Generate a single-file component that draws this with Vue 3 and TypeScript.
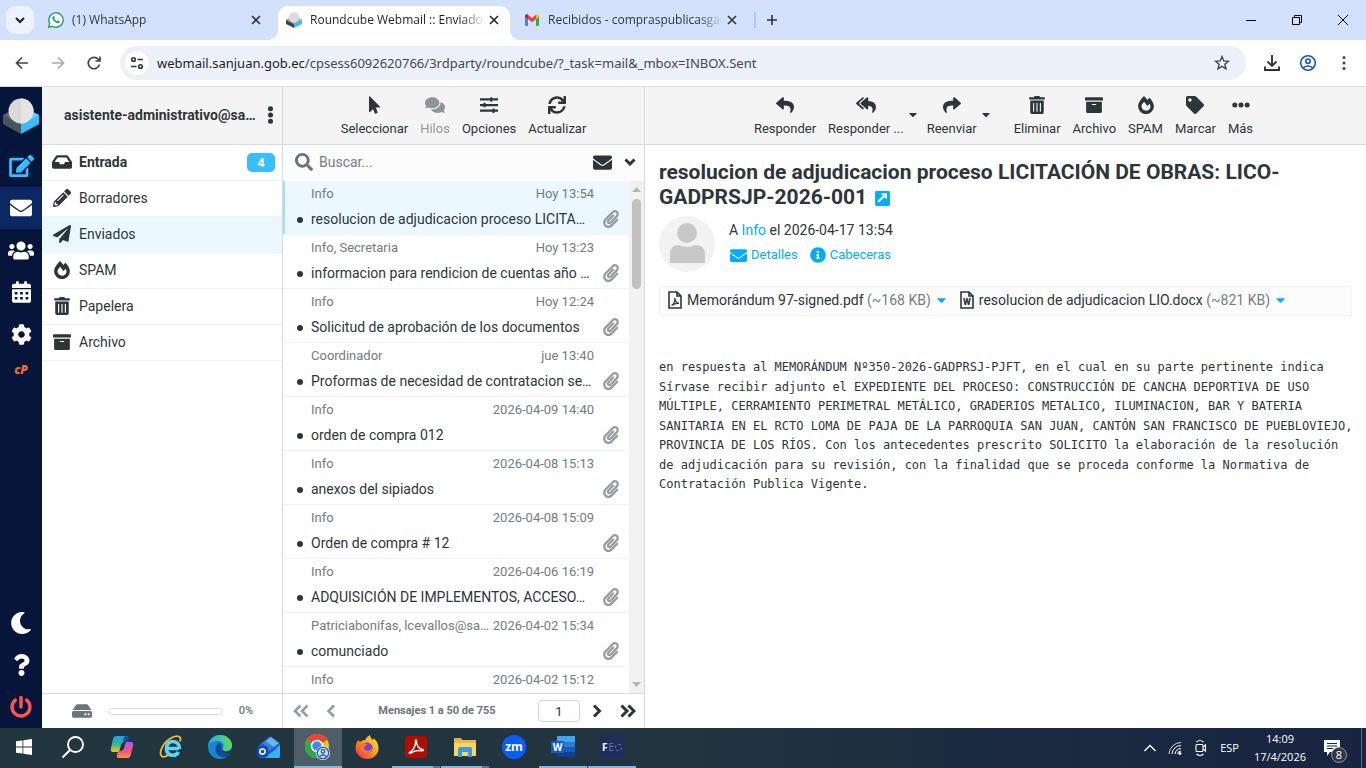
<script setup lang="ts">
import { h, ref } from 'vue'

const paths: Record<string, [number, string]> = {
  envelope: [512, 'M502.3 190.8c3.9-3.1 9.7-.2 9.7 4.7V400c0 26.5-21.5 48-48 48H48c-26.5 0-48-21.5-48-48V195.6c0-5 5.7-7.8 9.7-4.7 22.4 17.4 52.1 39.5 154.1 113.6 21.1 15.4 56.7 47.8 92.2 47.6 35.7.3 72-32.8 92.3-47.6 102-74.1 131.6-96.3 154-113.7zM256 320c23.2.4 56.6-29.2 73.4-41.4 132.7-96.3 142.8-104.7 173.4-128.7 5.8-4.5 9.2-11.5 9.2-18.9v-19c0-26.5-21.5-48-48-48H48c-26.5 0-48 21.5-48 48v19c0 7.4 3.4 14.3 9.2 18.9 30.6 23.9 40.7 32.4 173.4 128.7 16.8 12.2 50.2 41.8 73.4 41.4z'],
  inbox: [576, 'M567.938 243.908L462.25 85.374A48.003 48.003 0 0 0 422.311 64H153.689a48 48 0 0 0-39.938 21.374L8.062 243.908A47.994 47.994 0 0 0 0 270.533V400c0 26.51 21.49 48 48 48h480c26.51 0 48-21.49 48-48V270.533a47.994 47.994 0 0 0-8.062-26.625zM162.252 128h251.497l85.333 128H376l-32 64H232l-32-64H76.918l85.334-128z'],
  pencil: [512, 'M497.9 142.1l-46.1 46.1c-4.7 4.7-12.3 4.7-17 0l-111-111c-4.7-4.7-4.7-12.3 0-17l46.1-46.1c18.7-18.7 49.1-18.7 67.9 0l60.1 60.1c18.8 18.7 18.8 49.1 0 67.9zM284.2 99.8L21.6 362.4.4 483.9c-2.9 16.4 11.4 30.6 27.8 27.8l121.5-21.3 262.6-262.6c4.7-4.7 4.7-12.3 0-17l-111-111c-4.8-4.7-12.4-4.7-17.1 0zM124.1 339.9c-5.5-5.5-5.5-14.3 0-19.8l154-154c5.5-5.5 14.3-5.5 19.8 0s5.5 14.3 0 19.8l-154 154c-5.5 5.5-14.3 5.5-19.8 0zM88 424h48v36.3l-64.5 11.3-31.1-31.1L51.7 376H88v48z'],
  plane: [512, 'M476 3.2L12.5 270.6c-18.1 10.4-15.8 35.6 2.2 43.2L121 358.4l287.3-253.2c5.5-4.9 13.3 2.6 8.6 8.3L176 407v80.5c0 23.6 28.5 32.9 42.5 15.8L282 426l124.6 52.2c14.2 6 30.4-2.9 33-18.2l72-432C515 7.8 493.3-6.8 476 3.2z'],
  fire: [448, 'M323.56 51.2c-20.8 19.3-39.58 39.59-56.22 59.97C240.08 73.62 206.28 35.53 168 0 69.74 91.17 0 209.96 0 281.6 0 408.85 100.29 512 224 512s224-103.15 224-230.4c0-53.27-51.98-163.14-124.44-230.4zm-19.47 340.65C282.43 407.01 255.72 416 226.86 416 154.71 416 96 368.26 96 290.75c0-38.61 24.31-72.63 72.79-130.75 6.93 7.98 98.83 125.34 98.83 125.34l58.63-66.88c4.14 6.85 7.91 13.55 11.27 19.97 27.35 52.19 15.81 118.97-33.43 153.42z'],
  trash: [448, 'M32 464a48 48 0 0 0 48 48h288a48 48 0 0 0 48-48V128H32zm272-256a16 16 0 0 1 32 0v224a16 16 0 0 1-32 0zm-96 0a16 16 0 0 1 32 0v224a16 16 0 0 1-32 0zm-96 0a16 16 0 0 1 32 0v224a16 16 0 0 1-32 0zM432 32H312l-9.4-18.7A24 24 0 0 0 281.1 0H166.8a23.72 23.72 0 0 0-21.4 13.3L136 32H16A16 16 0 0 0 0 48v32a16 16 0 0 0 16 16h416a16 16 0 0 0 16-16V48a16 16 0 0 0-16-16z'],
  archive: [512, 'M32 448c0 17.7 14.3 32 32 32h384c17.7 0 32-14.3 32-32V160H32v288zm160-212c0-6.6 5.4-12 12-12h104c6.6 0 12 5.4 12 12v8c0 6.6-5.4 12-12 12H204c-6.6 0-12-5.4-12-12v-8zM480 32H32C14.3 32 0 46.3 0 64v48c0 8.8 7.2 16 16 16h480c8.8 0 16-7.2 16-16V64c0-17.7-14.3-32-32-32z'],
  edit: [576, 'M402.6 83.2l90.2 90.2c3.8 3.8 3.8 10 0 13.8L274.4 405.6l-92.8 10.3c-12.4 1.4-22.9-9.1-21.5-21.5l10.3-92.8L388.8 83.2c3.8-3.8 10-3.8 13.8 0zm162-22.9l-48.8-48.8c-15.2-15.2-39.9-15.2-55.2 0l-35.4 35.4c-3.8 3.8-3.8 10 0 13.8l90.2 90.2c3.8 3.8 10 3.8 13.8 0l35.4-35.4c15.2-15.3 15.2-40 0-55.2zM384 346.2V448H64V128h229.8c3.2 0 6.2-1.3 8.5-3.5l40-40c7.6-7.6 2.2-20.5-8.5-20.5H48C21.5 64 0 85.5 0 112v352c0 26.5 21.5 48 48 48h352c26.5 0 48-21.5 48-48V306.2c0-10.7-12.9-16-20.5-8.5l-40 40c-2.2 2.3-3.5 5.3-3.5 8.5z'],
  users: [640, 'M96 224c35.3 0 64-28.7 64-64s-28.7-64-64-64-64 28.7-64 64 28.7 64 64 64zm448 0c35.3 0 64-28.7 64-64s-28.7-64-64-64-64 28.7-64 64 28.7 64 64 64zm32 32h-64c-17.6 0-33.5 7.1-45.1 18.6 40.3 22.1 68.9 62 75.1 109.4h66c17.7 0 32-14.3 32-32v-32c0-35.3-28.7-64-64-64zm-256 0c61.9 0 112-50.1 112-112S381.9 32 320 32 208 82.1 208 144s50.1 112 112 112zm76.8 32h-8.3c-20.8 10-43.9 16-68.5 16s-47.6-6-68.5-16h-8.3C179.6 288 128 339.6 128 403.2V432c0 26.5 21.5 48 48 48h288c26.5 0 48-21.5 48-48v-28.8c0-63.6-51.6-115.2-115.2-115.2zm-223.7-13.4C161.5 263.1 145.6 256 128 256H64c-35.3 0-64 28.7-64 64v32c0 17.7 14.3 32 32 32h65.9c6.3-47.4 34.9-87.3 75.2-109.4z'],
  calendar: [448, 'M0 464c0 26.5 21.5 48 48 48h352c26.5 0 48-21.5 48-48V192H0zM64 256h64v56h-64zM192 256h64v56h-64zM320 256h64v56h-64zM64 376h64v56h-64zM192 376h64v56h-64zM320 376h64v56h-64zM400 64h-48V16c0-8.8-7.2-16-16-16h-32c-8.8 0-16 7.2-16 16v48H160V16c0-8.8-7.2-16-16-16h-32c-8.8 0-16 7.2-16 16v48H48C21.5 64 0 85.5 0 112v48h448v-48c0-26.5-21.5-48-48-48z'],
  cog: [512, 'M487.4 315.7l-42.6-24.6c4.3-23.2 4.3-47 0-70.2l42.6-24.6c4.9-2.8 7.1-8.6 5.5-14-11.1-35.6-30-67.8-54.7-94.6-3.8-4.1-10-5.1-14.8-2.3L380.8 110c-17.9-15.4-38.5-27.3-60.8-35.1V25.8c0-5.6-3.9-10.5-9.4-11.7-36.7-8.2-74.3-7.8-109.2 0-5.5 1.2-9.4 6.1-9.4 11.7V75c-22.2 7.9-42.8 19.8-60.8 35.1L88.7 85.5c-4.9-2.8-11-1.9-14.8 2.3-24.7 26.7-43.6 58.9-54.7 94.6-1.7 5.4.6 11.2 5.5 14L67.3 221c-4.3 23.2-4.3 47 0 70.2l-42.6 24.6c-4.9 2.8-7.1 8.6-5.5 14 11.1 35.6 30 67.8 54.7 94.6 3.8 4.1 10 5.1 14.8 2.3l42.6-24.6c17.9 15.4 38.5 27.3 60.8 35.1v49.2c0 5.6 3.9 10.5 9.4 11.7 36.7 8.2 74.3 7.8 109.2 0 5.5-1.2 9.4-6.1 9.4-11.7v-49.2c22.2-7.9 42.8-19.8 60.8-35.1l42.6 24.6c4.9 2.8 11 1.9 14.8-2.3 24.7-26.7 43.6-58.9 54.7-94.6 1.5-5.5-.7-11.3-5.6-14.1zM256 336c-44.1 0-80-35.9-80-80s35.9-80 80-80 80 35.9 80 80-35.9 80-80 80z'],
  moon: [512, 'M283.211 512c78.962 0 151.079-35.925 198.857-94.792 7.068-8.708-.639-21.43-11.562-19.35-124.203 23.654-238.262-71.576-238.262-196.954 0-72.222 38.662-138.635 101.498-174.394 9.686-5.512 7.25-20.197-3.756-22.23A258.156 258.156 0 0 0 283.211 0c-141.309 0-256 114.511-256 256 0 141.309 114.511 256 256 256z'],
  question: [384, 'M202.021 0C122.202 0 70.503 32.703 29.914 91.026c-7.363 10.58-5.093 25.086 5.178 32.874l43.138 32.709c10.373 7.865 25.132 6.026 33.253-4.148 25.049-31.381 43.63-49.449 82.757-49.449 30.764 0 68.816 19.799 68.816 49.631 0 22.552-18.617 34.134-48.993 51.164-35.423 19.86-82.299 44.576-82.299 106.405V320c0 13.255 10.745 24 24 24h72.471c13.255 0 24-10.745 24-24v-5.773c0-42.86 125.268-44.645 125.268-160.627C377.504 66.256 286.902 0 202.021 0zM192 373.459c-38.196 0-69.271 31.075-69.271 69.271 0 38.195 31.075 69.27 69.271 69.27s69.271-31.075 69.271-69.271-31.075-69.27-69.271-69.27z'],
  power: [512, 'M400 54.1c63 45 104 118.6 104 201.9 0 136.8-110.8 247.7-247.5 248C120 504.3 8.2 393 8 256.4 7.9 173.1 48.9 99.3 111.8 54.2c11.7-8.3 28-4.8 35 7.7L162.6 90c5.9 10.5 3.1 23.8-6.6 31-41.5 30.8-68 79.6-68 134.9-.1 92.3 74.5 168.1 168 168.1 91.6 0 168.6-74.2 168-169.1-.3-51.8-24.7-101.8-68.1-134-9.7-7.2-12.4-20.5-6.5-30.9l15.8-28.1c7-12.4 23.2-16.1 34.8-7.8zM296 264V24c0-13.3-10.7-24-24-24h-32c-13.3 0-24 10.7-24 24v240c0 13.3 10.7 24 24 24h32c13.3 0 24-10.7 24-24z'],
  pointer: [320, 'M302.189 329.126H196.105l55.831 135.993c3.889 9.428-.555 19.999-9.444 23.999l-49.165 21.427c-9.165 4-19.443-.571-23.332-9.714l-53.053-129.136-86.664 89.138C18.729 472.71 0 463.554 0 447.977V18.299C0 1.899 19.921-6.096 30.277 5.443l284.412 292.542c11.472 11.179 3.007 31.141-12.5 31.141z'],
  comments: [576, 'M416 192c0-88.4-93.1-160-208-160S0 103.6 0 192c0 34.3 14.1 65.9 38 92-13.4 30.2-35.5 54.2-35.8 54.5-2.2 2.3-2.8 5.7-1.5 8.7S4.8 352 8 352c36.6 0 66.9-12.3 88.7-25 32.2 15.7 70.3 25 111.3 25 114.9 0 208-71.6 208-160zm122 220c23.9-26 38-57.7 38-92 0-66.9-53.5-124.2-129.3-148.1.9 6.6 1.3 13.3 1.3 20.1 0 105.9-107.7 192-240 192-10.8 0-21.3-.8-31.7-1.9C207.8 439.6 281.8 480 368 480c41 0 79.1-9.2 111.3-25 21.8 12.7 52.1 25 88.7 25 3.2 0 6.1-1.9 7.3-4.8 1.3-2.9.7-6.3-1.5-8.7-.3-.3-22.4-24.2-35.8-54.5z'],
  sliders: [512, 'M0 64h288V48q0-16 16-16h32q16 0 16 16v16h160v64H352v16q0 16-16 16h-32q-16 0-16-16v-16H0zM0 224h96v-16q0-16 16-16h32q16 0 16 16v16h352v64H160v16q0 16-16 16h-32q-16 0-16-16v-16H0zM0 384h352v-16q0-16 16-16h32q16 0 16 16v16h96v64h-96v16q0 16-16 16h-32q-16 0-16-16v-16H0z'],
  sync: [512, 'M440.65 12.57l4 82.77A247.16 247.16 0 0 0 255.83 8C134.73 8 33.91 94.92 12.29 209.82A12 12 0 0 0 24.09 224h49.05a12 12 0 0 0 11.67-9.26 175.91 175.91 0 0 1 317-56.94l-101.46-4.86a12 12 0 0 0-12.57 12v47.41a12 12 0 0 0 12 12H500a12 12 0 0 0 12-12V12a12 12 0 0 0-12-12h-47.37a12 12 0 0 0-11.98 12.57zM255.83 432a175.61 175.61 0 0 1-146-77.8l101.8 4.87a12 12 0 0 0 12.57-12v-47.4a12 12 0 0 0-12-12H12a12 12 0 0 0-12 12V500a12 12 0 0 0 12 12h47.35a12 12 0 0 0 12-12.6l-4.15-82.57A247.17 247.17 0 0 0 255.83 504c121.11 0 221.93-86.92 243.55-201.82a12 12 0 0 0-11.8-14.18h-49.05a12 12 0 0 0-11.67 9.26A175.86 175.86 0 0 1 255.83 432z'],
  search: [512, 'M505 442.7L405.3 343c-4.5-4.5-10.6-7-17-7H372c27.6-35.3 44-79.7 44-128C416 93.1 322.9 0 208 0S0 93.1 0 208s93.1 208 208 208c48.3 0 92.7-16.4 128-44v16.3c0 6.4 2.5 12.5 7 17l99.7 99.7c9.4 9.4 24.6 9.4 33.9 0l28.3-28.3c9.4-9.4 9.4-24.6.1-34zM208 336c-70.7 0-128-57.2-128-128 0-70.7 57.2-128 128-128 70.7 0 128 57.2 128 128 0 70.7-57.2 128-128 128z'],
  clip: [448, 'M43.246 466.142c-58.43-60.289-57.341-157.511 1.386-217.581L254.392 34c44.316-45.332 116.351-45.336 160.671 0 43.89 44.894 43.943 117.329 0 162.276L232.214 383.128c-29.855 30.537-78.633 30.111-107.982-.998-28.275-29.97-27.368-77.473 1.452-106.953l143.743-146.835c6.182-6.314 16.312-6.422 22.626-.241l22.861 22.379c6.315 6.182 6.422 16.312.241 22.626L171.427 319.927c-4.932 5.045-5.236 13.428-.648 18.292 4.372 4.634 11.245 4.711 15.688.165l182.849-186.851c19.613-20.062 19.613-52.725-.011-72.798-19.189-19.627-49.957-19.637-69.154 0L90.39 293.295c-34.763 35.56-35.299 93.12-1.191 128.313 34.01 35.093 88.985 35.137 123.058.286l172.06-175.999c6.177-6.319 16.307-6.433 22.626-.256l22.877 22.364c6.319 6.177 6.434 16.307.256 22.626l-172.06 175.998c-59.576 60.938-155.943 60.216-214.77-.485z'],
  reply: [512, 'M8.309 189.836L184.313 37.851C199.719 24.546 224 35.347 224 56.015v80.053c160.629 1.839 288 34.032 288 186.258 0 61.441-39.581 122.309-83.333 154.132-13.653 9.931-33.111-2.533-28.077-18.631 45.344-145.012-21.507-183.51-176.59-185.742V360c0 20.7-24.3 31.453-39.687 18.164l-176.004-152c-11.071-9.562-11.086-26.753 0-36.328z'],
  replyAll: [576, 'M136.309 189.836L312.313 37.851C327.72 24.546 352 35.348 352 56.015v82.763c129.182 10.231 224 52.212 224 183.548 0 61.441-39.582 122.309-83.333 154.132-13.653 9.931-33.111-2.533-28.077-18.631 38.512-123.162-3.922-169.482-112.59-182.015v84.175c0 20.701-24.3 31.453-39.687 18.164L136.309 226.164c-11.071-9.561-11.086-26.753 0-36.328zm-128 36.328L184.313 378.15C199.7 391.439 224 380.687 224 359.986v-15.818l-108.606-93.785A55.96 55.96 0 0 1 96 207.998a55.953 55.953 0 0 1 19.393-42.38L224 71.832V56.015c0-20.667-24.28-31.469-39.687-18.164L8.309 189.836c-11.086 9.575-11.071 26.767 0 36.328z'],
  forward: [512, 'M503.691 189.836L327.687 37.851C312.281 24.546 288 35.347 288 56.015v80.053C127.371 137.907 0 170.1 0 322.326c0 61.441 39.581 122.309 83.333 154.132 13.653 9.931 33.111-2.533 28.077-18.631C66.066 312.814 132.917 274.316 288 272.085V360c0 20.7 24.3 31.453 39.687 18.164l176.004-152c11.071-9.562 11.086-26.753 0-36.328z'],
  tag: [512, 'M0 252.118V48C0 21.49 21.49 0 48 0h204.118a48 48 0 0 1 33.941 14.059l211.882 211.882c18.745 18.745 18.745 49.137 0 67.882L293.823 497.941c-18.745 18.745-49.137 18.745-67.882 0L14.059 286.059A48 48 0 0 1 0 252.118zM112 64c-26.51 0-48 21.49-48 48s21.49 48 48 48 48-21.49 48-48-21.49-48-48-48z'],
  dots: [512, 'M328 256a72 72 0 1 1-144 0 72 72 0 0 1 144 0zm104-72a72 72 0 1 0 0 144 72 72 0 0 0 0-144zm-352 0a72 72 0 1 0 0 144 72 72 0 0 0 0-144z'],
  kebab: [192, 'M96 184a72 72 0 1 1 0 144 72 72 0 0 1 0-144zM24 80a72 72 0 1 1 144 0 72 72 0 0 1-144 0zm0 352a72 72 0 1 1 144 0 72 72 0 0 1-144 0z'],
  hdd: [576, 'M576 304v96c0 26.51-21.49 48-48 48H48c-26.51 0-48-21.49-48-48v-96c0-26.51 21.49-48 48-48h480c26.51 0 48 21.49 48 48zm-48-80a79.557 79.557 0 0 1 30.777 6.165L462.25 85.374A48.003 48.003 0 0 0 422.311 64H153.689a48 48 0 0 0-39.938 21.374L17.223 230.165A79.557 79.557 0 0 1 48 224h480zm-48 96c-17.673 0-32 14.327-32 32s14.327 32 32 32 32-14.327 32-32-14.327-32-32-32zm-96 0c-17.673 0-32 14.327-32 32s14.327 32 32 32 32-14.327 32-32-14.327-32-32-32z'],
  info: [512, 'M256 8C119.043 8 8 119.083 8 256c0 136.997 111.043 248 248 248s248-111.003 248-248C504 119.083 392.957 8 256 8zm0 110c23.196 0 42 18.804 42 42s-18.804 42-42 42-42-18.804-42-42 18.804-42 42-42zm56 254c0 6.627-5.373 12-12 12h-88c-6.627 0-12-5.373-12-12v-24c0-6.627 5.373-12 12-12h12v-64h-12c-6.627 0-12-5.373-12-12v-24c0-6.627 5.373-12 12-12h64c6.627 0 12 5.373 12 12v100h12c6.627 0 12 5.373 12 12v24z'],
  open: [448, 'M40 32h368q40 0 40 40v368q0 40-40 40H40q-40 0-40-40V72q0-40 40-40zM180 110l55 55L70 330l48 48 165-165 55 55q22 16 22-12V120q0-24-24-24H196q-28 0-16 14z'],
  caret: [320, 'M31.3 192h257.3c17.8 0 26.7 21.5 14.1 34.1L174.1 354.8c-7.8 7.8-20.5 7.8-28.3 0L17.2 226.1C4.6 213.5 13.5 192 31.3 192z'],
}

const Icon = (props: { n: string; s: number }) => {
  const [w, d] = paths[props.n]
  return h('svg', {
    viewBox: `0 0 ${w} 512`,
    width: Math.round((props.s * w) / 512),
    height: props.s,
    fill: 'currentColor',
    'fill-rule': 'evenodd',
    'aria-hidden': 'true',
  }, [h('path', { d })])
}
Icon.props = ['n', 's']

const query = ref('')
const page = ref('1')

const folders = [
  { name: 'Entrada', icon: 'inbox', count: 4 },
  { name: 'Borradores', icon: 'pencil' },
  { name: 'Enviados', icon: 'plane', current: true },
  { name: 'SPAM', icon: 'fire' },
  { name: 'Papelera', icon: 'trash' },
  { name: 'Archivo', icon: 'archive' },
]

const listTools = [
  { label: 'Seleccionar', icon: 'pointer' },
  { label: 'Hilos', icon: 'comments', off: true },
  { label: 'Opciones', icon: 'sliders' },
  { label: 'Actualizar', icon: 'sync' },
]

const mailTools = [
  { label: 'Responder', icon: 'reply' },
  { label: 'Responder ...', icon: 'replyAll', menu: true },
  { label: 'Reenviar', icon: 'forward', menu: true, last: true },
  { label: 'Eliminar', icon: 'trash' },
  { label: 'Archivo', icon: 'archive' },
  { label: 'SPAM', icon: 'fire' },
  { label: 'Marcar', icon: 'tag' },
  { label: 'Más', icon: 'dots' },
]

const messages = [
  { to: 'Info', date: 'Hoy 13:54', subject: 'resolucion de adjudicacion proceso LICITA…' },
  { to: 'Info, Secretaria', date: 'Hoy 13:23', subject: 'informacion para rendicion de cuentas año …' },
  { to: 'Info', date: 'Hoy 12:24', subject: 'Solicitud de aprobación de los documentos' },
  { to: 'Coordinador', date: 'jue 13:40', subject: 'Proformas de necesidad de contratacion se…' },
  { to: 'Info', date: '2026-04-09 14:40', subject: 'orden de compra 012' },
  { to: 'Info', date: '2026-04-08 15:13', subject: 'anexos del sipiados' },
  { to: 'Info', date: '2026-04-08 15:09', subject: 'Orden de compra # 12' },
  { to: 'Info', date: '2026-04-06 16:19', subject: 'ADQUISICIÓN DE IMPLEMENTOS, ACCESO…' },
  { to: 'Patriciabonifas, lcevallos@sa…', date: '2026-04-02 15:34', subject: 'comunciado' },
  { to: 'Info', date: '2026-04-02 15:12', subject: '' },
]

const body = `en respuesta al MEMORÁNDUM Nº350-2026-GADPRSJ-PJFT, en el cual en su parte pertinente indica
Sírvase recibir adjunto el EXPEDIENTE DEL PROCESO: CONSTRUCCIÓN DE CANCHA DEPORTIVA DE USO
MÚLTIPLE, CERRAMIENTO PERIMETRAL METÁLICO, GRADERIOS METALICO, ILUMINACION, BAR Y BATERIA
SANITARIA EN EL RCTO LOMA DE PAJA DE LA PARROQUIA SAN JUAN, CANTÓN SAN FRANCISCO DE PUEBLOVIEJO,
PROVINCIA DE LOS RÍOS. Con los antecedentes prescrito SOLICITO la elaboración de la resolución
de adjudicación para su revisión, con la finalidad que se proceda conforme la Normativa de
Contratación Publica Vigente.`
</script>

<template>
  <div class="screen">
    <header class="tabs">
      <button class="tab-search" aria-label="Buscar pestañas">
        <svg width="12" height="12" viewBox="0 0 12 12" fill="none" stroke="#1f1f1f" stroke-width="2"><path d="M2 4l4 4 4-4" /></svg>
      </button>
      <div class="tab">
        <svg width="16" height="16" viewBox="0 0 16 16">
          <path d="M.7 15.300l1-3.800A7.200 7.200 0 1 1 4.500 14.300z" fill="#fff" stroke="#23a566" stroke-width="1.400" />
          <path d="M5.300 4.200c.5-.4.900-.2 1.100.2l.5 1.200c.1.300-.4.800-.6 1.100.6 1.200 1.500 2 2.900 2.600.4-.3.700-1 1.100-.9l1.400.7c.3.200.2.700 0 1.100-.5.900-1.500 1.200-2.400 1C6.900 10.600 5.200 8.900 4.500 7c-.3-1-.1-2.100.8-2.800z" fill="#23a566" />
        </svg>
        <span class="tab-title">(1) WhatsApp</span>
        <button class="tab-close" aria-label="Cerrar"><svg width="10" height="10" viewBox="0 0 10 10" stroke="#333" stroke-width="1.600"><path d="M1 1l8 8M9 1l-8 8" /></svg></button>
      </div>
      <div class="tab active">
        <svg width="16" height="16" viewBox="0 0 36 36">
          <path d="M0 18l18-9v27L0 27z" fill="#3c474d" /><path d="M36 18l-18-9v27l18-9z" fill="#37beff" /><path d="M0 18l18-10 18 10-18 9z" fill="#aaa" /><circle cx="18" cy="12" r="12" fill="#dcdcdc" />
        </svg>
        <span class="tab-title">Roundcube Webmail :: Enviados</span>
        <button class="tab-close" aria-label="Cerrar"><svg width="10" height="10" viewBox="0 0 10 10" stroke="#222" stroke-width="1.600"><path d="M1 1l8 8M9 1l-8 8" /></svg></button>
      </div>
      <div class="tab">
        <svg width="16" height="16" viewBox="0 0 16 16">
          <path d="M1 4h3v10H2a1 1 0 0 1-1-1z" fill="#4285f4" /><path d="M12 4h3v9a1 1 0 0 1-1 1h-2z" fill="#34a853" /><path d="M1 4a1.800 1.800 0 0 1 3-1.300L8 6l4-3.300V7l-4 3.200L4 7 1 5z" fill="#ea4335" /><path d="M12 2.700A1.800 1.800 0 0 1 15 4v1l-3 2.200z" fill="#fbbc04" /><path d="M1 4a1.800 1.800 0 0 1 3-1.300V7L1 5z" fill="#c5221f" />
        </svg>
        <span class="tab-title">Recibidos - compraspublicasgad</span>
        <button class="tab-close" aria-label="Cerrar"><svg width="10" height="10" viewBox="0 0 10 10" stroke="#333" stroke-width="1.600"><path d="M1 1l8 8M9 1l-8 8" /></svg></button>
      </div>
      <span class="tab-rule"></span>
      <button class="tab-new" aria-label="Nueva pestaña"><svg width="12" height="12" viewBox="0 0 12 12" stroke="#333" stroke-width="1.600"><path d="M6 1v10M1 6h10" /></svg></button>
      <div class="win">
        <button aria-label="Minimizar"><svg width="12" height="12" viewBox="0 0 12 12" stroke="#000"><path d="M1 6.500h10" /></svg></button>
        <button aria-label="Restaurar"><svg width="12" height="12" viewBox="0 0 12 12" fill="none" stroke="#000"><path d="M1.500 3.500h7v7h-7zM3.500 3.500v-2h7v7h-2" /></svg></button>
        <button aria-label="Cerrar ventana"><svg width="12" height="12" viewBox="0 0 12 12" stroke="#000"><path d="M1 1l10 10M11 1L1 11" /></svg></button>
      </div>
    </header>

    <div class="address">
      <div class="nav">
        <button aria-label="Atrás"><svg width="16" height="16" viewBox="0 0 16 16" fill="none" stroke="#444" stroke-width="1.700"><path d="M14 8H3M8 2.500L2.500 8 8 13.500" /></svg></button>
        <button aria-label="Adelante"><svg width="16" height="16" viewBox="0 0 16 16" fill="none" stroke="#aaa" stroke-width="1.700"><path d="M2 8h11M8 2.500L13.500 8 8 13.500" /></svg></button>
        <button aria-label="Recargar"><svg width="16" height="16" viewBox="0 0 16 16" fill="none" stroke="#444" stroke-width="1.700"><path d="M13.500 9.500A5.700 5.700 0 1 1 12.300 4.300L14 6M14 1.500V6H9.500" /></svg></button>
      </div>
      <div class="omni">
        <span class="site"><svg width="14" height="14" viewBox="0 0 14 14" fill="none" stroke="#333" stroke-width="1.600"><circle cx="3.500" cy="3.500" r="1.800" /><path d="M7.500 3.500h5.500M1 10.500h5.500" /><circle cx="10.500" cy="10.500" r="1.800" /></svg></span>
        <span class="url"><b>webmail.sanjuan.gob.ec</b>/cpsess6092620766/3rdparty/roundcube/?_task=mail&amp;_mbox=INBOX.Sent</span>
        <button aria-label="Marcador"><svg width="16" height="16" viewBox="0 0 16 16" fill="none" stroke="#444" stroke-width="1.400"><path d="M8 1.600l1.800 4.300 4.600.4-3.500 3 1.100 4.500L8 11.400l-4 2.400 1.100-4.500-3.500-3 4.600-.4z" /></svg></button>
      </div>
      <div class="nav">
        <button aria-label="Descargas"><svg width="18" height="18" viewBox="0 0 18 18" fill="none" stroke="#333" stroke-width="1.900"><path d="M9 1v10.500M4.500 7.500L9 12l4.500-4.500M2 12.500V16h14v-3.500" /></svg></button>
        <button aria-label="Perfil"><svg width="18" height="18" viewBox="0 0 18 18" fill="none" stroke="#1a56b8" stroke-width="1.600"><circle cx="9" cy="9" r="7.300" /><circle cx="9" cy="7.200" r="2.200" /><path d="M4 14.200c2.500-3 7.500-3 10 0" /></svg></button>
        <button aria-label="Menú"><svg width="16" height="16" viewBox="0 0 16 16" fill="#444"><circle cx="8" cy="2.500" r="1.500" /><circle cx="8" cy="8" r="1.500" /><circle cx="8" cy="13.500" r="1.500" /></svg></button>
      </div>
    </div>

    <div class="mail">
      <nav class="rail">
        <a class="logo" href="#" aria-label="Roundcube">
          <svg width="36" height="36" viewBox="0 0 36 36">
            <path d="M0 17l18-8v27L0 26z" fill="#4a555b" /><path d="M36 17l-18-8v27l18-10z" fill="#37beff" /><path d="M0 17l18-9v19z" fill="#5c666b" /><path d="M36 17L18 8v18z" fill="#67ccff" /><circle cx="18" cy="13" r="12.500" fill="#d9d9d9" /><path d="M18 .5a12.500 12.500 0 0 1 0 25z" fill="#e4e4e4" />
          </svg>
        </a>
        <a href="#" class="compose" aria-label="Redactar"><Icon n="edit" :s="22" /></a>
        <a href="#" class="current" aria-label="Correo"><Icon n="envelope" :s="22" /></a>
        <a href="#" aria-label="Contactos"><Icon n="users" :s="21" /></a>
        <a href="#" aria-label="Calendario"><Icon n="calendar" :s="22" /></a>
        <a href="#" aria-label="Configuración"><Icon n="cog" :s="21" /></a>
        <a href="#" class="cp">cP</a>
        <span class="grow"></span>
        <a href="#" aria-label="Modo oscuro"><Icon n="moon" :s="22" /></a>
        <a href="#" aria-label="Acerca de"><Icon n="question" :s="22" /></a>
        <a href="#" class="logout" aria-label="Cerrar sesión"><Icon n="power" :s="22" /></a>
      </nav>

      <aside class="folders">
        <div class="bar account">
          <strong>asistente-administrativo@sa…</strong>
          <button aria-label="Acciones"><Icon n="kebab" :s="18" /></button>
        </div>
        <ul>
          <li v-for="f in folders" :key="f.name" :class="{ current: f.current, unread: f.count }">
            <a href="#"><span class="ficon"><Icon :n="f.icon" :s="18" /></span>{{ f.name }}</a>
            <span v-if="f.count" class="count">{{ f.count }}</span>
          </li>
        </ul>
        <footer class="quota">
          <Icon n="hdd" :s="18" />
          <span class="meter"></span>
          <span>0%</span>
        </footer>
      </aside>

      <section class="list">
        <div class="bar tools">
          <button v-for="t in listTools" :key="t.label" :disabled="t.off"><Icon :n="t.icon" :s="18" />{{ t.label }}</button>
        </div>
        <div class="searchbar">
          <label for="q" aria-label="Buscar"><Icon n="search" :s="18" /></label>
          <input id="q" v-model="query" type="text" placeholder="Buscar..." />
          <button aria-label="No leídos"><Icon n="envelope" :s="19" /></button>
          <button aria-label="Opciones de búsqueda"><svg width="12" height="8" viewBox="0 0 12 8" fill="none" stroke="currentColor" stroke-width="3"><path d="M1.500 1.500L6 6l4.500-4.500" /></svg></button>
        </div>
        <div class="scroll">
          <ul>
            <li v-for="(m, i) in messages" :key="i" :class="{ current: i === 0 }">
              <div class="meta"><span class="to">{{ m.to }}</span><time>{{ m.date }}</time></div>
              <div class="line"><i class="dot"></i><a href="#">{{ m.subject }}</a><span class="att"><Icon n="clip" :s="18" /></span></div>
            </li>
          </ul>
          <div class="track">
            <svg width="9" height="5" viewBox="0 0 9 5" fill="#b5b5b5"><path d="M0 5L4.500 0 9 5z" /></svg>
            <span class="thumb"></span>
            <svg width="9" height="5" viewBox="0 0 9 5" fill="#b5b5b5"><path d="M0 0l4.500 5L9 0z" /></svg>
          </div>
        </div>
        <footer class="pager">
          <button disabled aria-label="Primera"><svg width="16" height="14" viewBox="0 0 16 14" fill="none" stroke="currentColor" stroke-width="2.500"><path d="M7.500 1.500L2 7l5.500 5.500M14.500 1.500L9 7l5.500 5.500" /></svg></button>
          <button disabled aria-label="Anterior"><svg width="10" height="14" viewBox="0 0 10 14" fill="none" stroke="currentColor" stroke-width="2.500"><path d="M8 1.500L2.500 7 8 12.500" /></svg></button>
          <strong>Mensajes 1 a 50 de 755</strong>
          <input v-model="page" type="text" aria-label="Página" />
          <button aria-label="Siguiente"><svg width="10" height="14" viewBox="0 0 10 14" fill="none" stroke="currentColor" stroke-width="3"><path d="M2 1.500L7.500 7 2 12.500" /></svg></button>
          <button aria-label="Última"><svg width="16" height="14" viewBox="0 0 16 14" fill="none" stroke="currentColor" stroke-width="3"><path d="M1.500 1.500L7 7l-5.500 5.500M8.500 1.500L14 7l-5.500 5.500" /></svg></button>
        </footer>
      </section>

      <main class="view">
        <div class="bar tools">
          <template v-for="t in mailTools" :key="t.label">
            <button><Icon :n="t.icon" :s="18" />{{ t.label }}</button>
            <button v-if="t.menu" class="more" :class="{ last: t.last }" :aria-label="t.label + ' opciones'"><Icon n="caret" :s="13" /></button>
          </template>
        </div>
        <article>
          <h1>resolucion de adjudicacion proceso LICITACIÓN DE OBRAS: LICO-<br />GADPRSJP-2026-001 <a href="#" aria-label="Abrir en ventana nueva"><Icon n="open" :s="17" /></a></h1>
          <div class="head">
            <svg class="avatar" width="56" height="56" viewBox="0 0 56 56"><circle cx="28" cy="28" r="28" fill="#f2f2f2" /><circle cx="28" cy="17" r="10" fill="#c8c8c8" /><path d="M11 47V38q0-9 9-9 8 4 16 0 10 0 10 9v9z" fill="#c8c8c8" /></svg>
            <div>
              <p>A <a href="#">Info</a> el 2026-04-17 13:54</p>
              <p class="links">
                <a href="#"><Icon n="envelope" :s="17" />Detalles</a>
                <a href="#"><Icon n="info" :s="16" />Cabeceras</a>
              </p>
            </div>
          </div>
          <ul class="files">
            <li>
              <svg width="14" height="18" viewBox="0 0 14 18" fill="none" stroke="#2c363a" stroke-width="1.600"><path d="M1 1h8l4 4v12H1zM9 1v4h4" /><path d="M3.500 14.500c2-1 3.500-4.500 3.500-7.500 0 3 2 5 4 5.500-2.500-.5-5 .5-7.500 2z" stroke-width="1.200" /></svg>
              <a href="#">Memorándum 97-signed.pdf <small>(~168 KB)</small></a><button aria-label="Opciones del adjunto"><Icon n="caret" :s="14" /></button>
            </li>
            <li>
              <svg width="14" height="18" viewBox="0 0 14 18"><path d="M1 1h8l4 4v12H1zM9 1v4h4" fill="none" stroke="#2c363a" stroke-width="1.600" /><text x="7" y="14" text-anchor="middle" font-family="Roboto, sans-serif" font-weight="900" font-size="9" fill="#2c363a">W</text></svg>
              <a href="#">resolucion de adjudicacion LIO.docx <small>(~821 KB)</small></a><button aria-label="Opciones del adjunto"><Icon n="caret" :s="14" /></button>
            </li>
          </ul>
          <div class="body"><pre>{{ body }}</pre></div>
        </article>
      </main>
    </div>

    <footer class="taskbar">
      <button aria-label="Inicio"><svg width="16" height="16" viewBox="0 0 16 16" fill="#fff"><path d="M0 2.300L6.500 1.400v6.200H0zM7.300 1.300L16 0v7.600H7.300zM0 8.400h6.500v6.200L0 13.700zM7.300 8.400H16V16l-8.700-1.300z" /></svg></button>
      <button aria-label="Buscar en Windows"><svg width="24" height="24" viewBox="0 0 24 24" fill="none" stroke="#fff" stroke-width="1.900"><circle cx="14.500" cy="9.500" r="7.500" /><path d="M9 15l-7.500 7.500" /></svg></button>
      <button aria-label="Copilot">
        <svg width="24" height="24" viewBox="0 0 24 24">
          <defs><linearGradient id="c1" x1="0" y1="0" x2="0" y2="1"><stop offset="0" stop-color="#1fa0f0" /><stop offset=".5" stop-color="#32b58d" /><stop offset="1" stop-color="#f3c91c" /></linearGradient><linearGradient id="c2" x1="0" y1="0" x2="0" y2="1"><stop offset="0" stop-color="#b45af0" /><stop offset=".6" stop-color="#f0567d" /><stop offset="1" stop-color="#fb9b4b" /></linearGradient></defs>
          <path d="M6 1h10q3 0 2 3l-1 3h-3q-2 0-3 3l-2 7H3q-3 0-2-4L3 4q1-3 3-3z" fill="url(#c1)" /><path d="M15 1q3 0 3.500 3L19 7h-4q-2 0-2-2z" fill="#1747a6" /><path d="M18 23H9q-3 0-2-3l1-4h3q2 0 3-3l2-6h5q3 0 2 4l-2 8q-1 4-3 4z" fill="url(#c2)" />
        </svg>
      </button>
      <button aria-label="Internet Explorer">
        <svg width="24" height="24" viewBox="0 0 24 24" fill="none"><path d="M20 13.500H8.500M19.500 17c-3 5-12 4.500-12-3.500 0-9.500 13-9.500 13 .5" stroke="#5fd3f7" stroke-width="3.600" /><path d="M3 21.500C-1 18 4 7 13 2.500c6-3 10-1 8 4" stroke="#f1c232" stroke-width="1.800" /><path d="M3 21.500c2 1 4 0 6-1.200" stroke="#f1c232" stroke-width="1.600" /></svg>
      </button>
      <button aria-label="Edge">
        <svg width="24" height="24" viewBox="0 0 24 24">
          <defs><linearGradient id="e1" x1="0" y1="0" x2="1" y2="0"><stop offset="0" stop-color="#2aa9e8" /><stop offset="1" stop-color="#5fdc62" /></linearGradient></defs>
          <circle cx="12" cy="12" r="12" fill="#1585d6" /><path d="M0 11C1 4 6 0 12 0c7 0 12 5 12 10 0 4-3 6-6 6-2 0-4-1-3-3 2-4-1-7-5-7-5 0-9 2-10 5z" fill="url(#e1)" /><path d="M10 8c-4 4-4 12 4 14 3 1 7-1 9-4-4 2-10 1-10-4 0-2 1-2 1-3 0-2-2-3-4-3z" fill="#0f4a9a" /><path d="M14.500 12.500c-1 2 0 4 4 4 3 0 4-1.500 5.300-3.500 0 2-.3 4-1.300 5.300-4 1.500-9 0-9-3.800 0-1 .5-1.500 1-2z" fill="#22363f" />
        </svg>
      </button>
      <button aria-label="Outlook">
        <svg width="24" height="24" viewBox="0 0 24 24"><path d="M2 10L13 1l10 8v12q0 2-2 2H4q-2 0-2-2z" fill="#1765cf" /><path d="M6 8l8-6 8 6-10 8z" fill="#63b7f4" /><path d="M23 10v11q0 2-2 2H8z" fill="#35b3f5" /><path d="M8 6l12 8-7 4-8-6z" fill="#2356c4" opacity=".6" /><rect y="11" width="11" height="11" rx="2" fill="#0f4fb0" /><circle cx="5.500" cy="16.500" r="2.600" fill="none" stroke="#fff" stroke-width="1.500" /></svg>
      </button>
      <button class="focus run" aria-label="Chrome">
        <svg width="26" height="26" viewBox="0 0 26 26"><circle cx="12" cy="12" r="12" fill="#fbc116" /><path d="M12 12L1.600 6A12 12 0 0 1 22.400 6z" fill="#ea4335" /><path d="M12 12L1.600 6A12 12 0 0 0 12 24l4-8z" fill="#2da94f" /><circle cx="12" cy="12" r="5.500" fill="#4285f4" stroke="#fff" stroke-width="1.500" /><circle cx="18" cy="19" r="7" fill="#d9e7fd" /><circle cx="18" cy="19" r="5.600" fill="none" stroke="#1a56b8" stroke-width="1.300" /><circle cx="18" cy="17.500" r="1.800" fill="none" stroke="#1a56b8" stroke-width="1.300" /><path d="M14.500 22.500q3.500-3 7 0" fill="none" stroke="#1a56b8" stroke-width="1.300" /></svg>
      </button>
      <button aria-label="Firefox">
        <svg width="24" height="24" viewBox="0 0 24 24">
          <defs><linearGradient id="f1" x1="1" y1="0" x2="0" y2="1"><stop offset="0" stop-color="#fff04a" /><stop offset=".5" stop-color="#ff980e" /><stop offset="1" stop-color="#f5156c" /></linearGradient></defs>
          <path d="M3 5l2 2q2-2 5-2 1-3 5-5 0 3 3 5 1-1 .5-2Q24 8 23.500 14C23 20 18 24 12 24S.5 19 .5 13C.5 9 2 7 3 5z" fill="url(#f1)" /><circle cx="12" cy="13" r="5.600" fill="#7a42d8" /><path d="M4 9q5-2 9 1-4 0-4 3c0 3 6 4 8 0 0 6-7 7-10 3Q4 13 4 9z" fill="#ff7a1f" />
        </svg>
      </button>
      <button class="run split" aria-label="Acrobat">
        <svg width="22" height="22" viewBox="0 0 22 22"><rect width="22" height="22" rx="4" fill="#b30b00" /><path d="M4.500 16.500c3.500-1.500 6.500-7 6-11.500-.2-1.500 1.200-1.500 1 .2-.3 4 3 8 6 8.300 1.500.2 1 1.500-.5 1.300-4-.8-8 0-11 2.200-1 .8-2.300.3-1.500-.5z" fill="none" stroke="#fff" stroke-width="1.400" /></svg>
      </button>
      <button class="run split" aria-label="Explorador de archivos">
        <svg width="24" height="22" viewBox="0 0 24 22"><path d="M1 2h7l2 3H1z" fill="#e6a83a" /><path d="M1 4h22v16H1z" fill="#fcd462" /><path d="M1 4h22v3H1z" fill="#e9b949" /><path d="M5 21v-8q0-2 2-2h10q2 0 2 2v8h-4v-5H9v5z" fill="#3f9bd8" /></svg>
      </button>
      <button aria-label="Zoom"><span class="zm">zm</span></button>
      <button class="run" aria-label="Word">
        <svg width="24" height="22" viewBox="0 0 24 22"><path d="M6 0h18v6H6z" fill="#41a5ee" /><path d="M6 6h18v5H6z" fill="#2b7cd3" /><path d="M6 11h18v5H6z" fill="#185abd" /><path d="M6 16h18v5H6z" fill="#103f91" /><rect y="5" width="13" height="12" rx="1" fill="#185abd" /><text x="6.500" y="15" text-anchor="middle" font-family="Open Sans, sans-serif" font-weight="700" font-size="10" fill="#fff">W</text></svg>
      </button>
      <button class="run" aria-label="FEO"><span class="feo"><b>F</b>E<i></i></span></button>
      <span class="grow"></span>
      <div class="tray">
        <svg width="12" height="8" viewBox="0 0 12 8" fill="none" stroke="#fff" stroke-width="1.300"><path d="M.5 7L6 1.500 11.500 7" /></svg>
        <svg width="14" height="14" viewBox="0 0 14 14" fill="none" stroke="#fff"><path d="M1 13A12 12 0 0 1 13 1.500" opacity=".8" /><path d="M4 13a9 9 0 0 1 9-8.500M7 13a6 6 0 0 1 6-5.500M9.500 13A3.500 3.500 0 0 1 13 10" /><circle cx="12" cy="12.500" r="1" fill="#fff" /></svg>
        <svg width="14" height="18" viewBox="0 0 14 18" fill="none" stroke="#fff" stroke-width="1.100"><rect x="2" y="5.500" width="7" height="7" rx="1" /><path d="M9 8l2.500-2v6L9 10M2.500 3Q6 0 9.500 3M2.500 15Q6 18 9.500 15" /></svg>
        <span class="lang">ESP</span>
        <div class="clock"><span>14:09</span><span>17/4/2026</span></div>
        <button class="notes" aria-label="Notificaciones">
          <svg width="16" height="16" viewBox="0 0 16 16"><path d="M0 0h16v12H6l-3 4v-4H0z" fill="#fff" /><path d="M3 3.500h10M3 6h10M3 8.500h6" stroke="#1b2640" /></svg>
          <span>8</span>
        </button>
      </div>
      <span class="peek"></span>
    </footer>
  </div>
</template>

<style>
body { margin: 0; }
</style>

<style scoped>
* { box-sizing: border-box; }
.screen { display: flex; flex-direction: column; height: 100vh; overflow: hidden; font-family: Roboto, sans-serif; font-size: 14px; line-height: 20px; color: #2c363a; background: #fff; }
button { padding: 0; border: 0; background: none; font: inherit; color: inherit; }
a { color: inherit; text-decoration: none; }
ul { margin: 0; padding: 0; list-style: none; }
svg { flex: none; display: block; }
.grow { flex: 1; }

.tabs { flex: none; display: flex; align-items: center; height: 40px; padding-left: 6px; background: #d3e1fc; font-family: "Open Sans", sans-serif; font-size: 12px; color: #30343a; }
.tab-search { display: grid; place-items: center; width: 28px; height: 28px; border-radius: 9px; background: #ebf1fd; margin-right: 6px; }
.tab { display: flex; align-items: center; gap: 8px; width: 232px; height: 34px; margin: 6px 6px 0 0; padding: 0 11px 6px 8px; }
.tab svg { flex: none; }
.tab.active { position: relative; background: #fff; border-radius: 10px 10px 0 0; color: #1f1f1f; }
.tab.active::before, .tab.active::after { content: ""; position: absolute; bottom: 0; width: 10px; height: 10px; }
.tab.active::before { right: 100%; background: radial-gradient(circle at 0 0, transparent 10px, #fff 10px); }
.tab.active::after { left: 100%; background: radial-gradient(circle at 100% 0, transparent 10px, #fff 10px); }
.tab-title { flex: 1; margin-right: -4px; overflow: hidden; white-space: nowrap; mask-image: linear-gradient(to right, #000 calc(100% - 24px), transparent); }
.tab-rule { width: 2px; height: 16px; background: #a8c7fa; }
.tab-new { margin-left: 10px; }
.win { display: flex; margin-left: auto; }
.win button { display: grid; place-items: center; width: 46px; height: 40px; }

.address { flex: none; display: flex; align-items: center; height: 46px; background: #fff; }
.nav { display: flex; }
.nav button { display: grid; place-items: center; width: 36px; height: 34px; }
.nav:first-child { padding: 0 8px 0 4px; }
.nav:last-child { padding: 0 4px 0 8px; }
.omni { flex: 1; display: flex; align-items: center; gap: 8px; height: 34px; padding: 0 16px 0 5px; border-radius: 17px; background: #ebf0f9; font-family: "Noto Sans", sans-serif; font-size: 13px; color: #45494e; }
.site { display: grid; place-items: center; width: 24px; height: 24px; border-radius: 50%; background: #fff; }
.url { flex: 1; white-space: nowrap; overflow: hidden; }
.url b { font-weight: 400; color: #1f1f1f; }

.mail { flex: 1; min-height: 0; display: flex; border-top: 1px solid #dadfe2; }
.rail { flex: none; width: 42px; display: flex; flex-direction: column; background: #05163a; color: #fff; }
.rail a { display: grid; place-items: center; height: 42px; }
.rail .logo { height: 58px; }
.rail .compose { color: #37beff; }
.rail .current { background: #0b2865; }
.rail .cp { height: 30px; color: #f06a35; font: italic 800 12px/30px "Open Sans", sans-serif; }
.rail .logout { color: #ff5552; }

.bar { flex: none; height: 58px; background: #f4f4f4; border-bottom: 1px solid #d5dade; }
.folders { flex: none; width: 241px; display: flex; flex-direction: column; border-right: 1px solid #d5dade; }
.account { display: flex; align-items: center; justify-content: space-between; padding: 0 8px 2px 22px; }
.folders ul { flex: 1; }
.folders li { display: flex; align-items: center; justify-content: space-between; height: 36px; padding: 0 7px 1px 8px; border-bottom: 1px solid #eff1f2; }
.folders li a { display: flex; align-items: center; }
.ficon { display: grid; place-items: center; width: 23px; margin-right: 6px; }
.folders .current { background: #ebf8ff; }
.folders .unread { font-weight: 700; }
.count { width: 28px; border-radius: 5px; background: #37beff; color: #fff; font-size: 13px; line-height: 19px; text-align: center; }
.quota, .pager { flex: none; display: flex; align-items: center; height: 35px; border-top: 1px solid #d5dade; color: #6b7478; font-size: 11px; font-weight: 500; }
.quota { padding: 0 29px 0 30px; justify-content: space-between; }
.meter { width: 115px; height: 7px; border: 1px solid #d5dade; border-radius: 4px; }

.list { flex: none; width: 362px; display: flex; flex-direction: column; border-right: 1px solid #d5dade; }
.tools { display: flex; justify-content: center; font-size: 13px; }
.tools button { display: flex; flex-direction: column; align-items: center; gap: 5px; padding: 9px 6px 0; }
.view .tools { padding-right: 4px; }
.view .tools button { min-width: 36px; }
.tools button:disabled { opacity: .5; }
.view .tools .more { min-width: 8px; width: 16px; margin-left: -5px; padding: 21px 0 0; }
.view .tools .last { margin-right: 14px; }
.searchbar { flex: none; display: flex; align-items: center; gap: 6px; height: 36px; padding: 0 8px 2px 12px; background: #fbfbfb; }
.searchbar label { color: #6b7478; }
.searchbar input { flex: 1; min-width: 0; border: 0; outline: 0; background: none; font: inherit; padding: 0; }
.searchbar input::placeholder { color: #757e82; opacity: 1; }
.searchbar button + button { margin-left: 6px; }
.scroll { flex: 1; min-height: 0; display: flex; overflow: hidden; }
.scroll ul { flex: 1; min-width: 0; }
.scroll li { height: 54px; padding: 3px 10px 0 16px; border-bottom: 1px solid #eff1f2; }
.scroll li.current { background: #ebf8ff; border-bottom-color: #ebf8ff; box-shadow: inset 2px 0 0 #a6ddf7; }
.meta { display: flex; justify-content: space-between; gap: 2px; padding: 0 25px 0 12px; font-size: 13px; color: #737b7f; }
.to { overflow: hidden; text-overflow: ellipsis; white-space: nowrap; }
.meta time { flex: none; }
.line { display: flex; align-items: center; height: 30px; }
.dot { flex: none; width: 6px; height: 6px; margin: 2px 8px 0 -2px; border-radius: 50%; background: #2c363a; }
.line a { flex: 1; min-width: 0; overflow: hidden; text-overflow: ellipsis; white-space: nowrap; }
.att { margin-left: 10px; color: #959b9e; }
.track { flex: none; width: 15px; display: flex; flex-direction: column; align-items: center; padding: 6px 0; background: #f1f1f1; }
.thumb { width: 9px; height: 90px; margin: 7px 0 auto; border-radius: 5px; background: #c1c1c1; }
.pager { padding: 0 8px 0 10px; color: #2c363a; }
.pager button:disabled { color: #959b9e; }
.pager button:nth-child(2) { margin-left: 17px; }
.pager strong { flex: 1; text-align: center; color: #6b7478; font-weight: 700; }
.pager input { width: 42px; height: 22px; margin-right: 12px; border: 1px solid #ced4da; border-radius: 4px; font: 13px/20px Roboto, sans-serif; color: inherit; text-align: center; padding: 0; }
.pager button:last-child { margin-left: 18px; }

.view { flex: 1; min-width: 0; display: flex; flex-direction: column; }
article { padding: 15px 14px 0; }
h1 { margin: 0; font-size: 21px; line-height: 25px; font-weight: 700; }
h1 a { display: inline-block; margin-left: 3px; color: #00acff; vertical-align: -3px; }
.head { display: flex; gap: 14px; margin-top: 6px; }
.head p { margin: 4px 0 0; }
.head a { color: #00acff; }
.head .links { display: flex; gap: 12px; margin-top: 5px; padding-left: 1px; font-size: 13px; }
.links a { display: flex; align-items: center; gap: 4px; }
.files { display: flex; gap: 14px; margin-top: 14px; padding: 3px 8px 5px; border: 1px solid #f0f2f3; background: #fcfcfc; }
.files li { display: flex; align-items: center; gap: 5px; }
.files small { font-size: 14px; color: #757e82; }
.files button { color: #00acff; margin-left: 1px; }
.body { margin-top: 42px; font-size: 13px; line-height: 1.5em; }
pre { margin: 0; font-family: "DejaVu Sans Mono", monospace; font-size: 12px; }

.taskbar { flex: none; display: flex; align-items: center; gap: 1px; height: 40px; background: linear-gradient(to right, #22363f, #21343f 50%, #1b2a40 75%, #192441); font-family: "Open Sans", sans-serif; font-size: 11px; color: #fff; }
.taskbar > button { display: grid; place-items: center; width: 48px; height: 40px; border-bottom: 2px solid transparent; }
.taskbar .run { border-bottom-color: #76b9ed; }
.taskbar .split { border-image: linear-gradient(to right, #76b9ed 83%, #4f7d9d 83%) 2; border-top: 0; border-left: 0; border-right: 0; }
.taskbar .focus { background: #4e5e66; }
.zm { display: grid; place-items: center; width: 24px; height: 24px; border-radius: 50%; background: #0b5cff; font-weight: 700; font-size: 12px; line-height: 20px; }
.feo { display: flex; align-items: center; justify-content: center; gap: 1px; width: 24px; height: 24px; background: #1d2d5c; font-size: 10px; color: #6f78a8; }
.feo b { color: #fff; }
.feo i { width: 7px; height: 7px; border: 1px dashed #8a6a9c; border-radius: 50%; }
.tray { display: flex; align-items: center; height: 40px; padding-right: 20px; }
.tray > svg { margin-right: 12px; }
.lang { margin-right: 15px; }
.clock { display: flex; flex-direction: column; align-items: center; line-height: 18px; margin-right: 18px; }
.notes { position: relative; }
.notes span { position: absolute; left: 7px; top: 7px; width: 16px; height: 16px; border: 1px solid #8b93a3; border-radius: 50%; background: #2f3648; font-size: 11px; line-height: 14px; text-align: center; }
.peek { width: 1px; height: 40px; margin-right: 4px; background: #5c667c; }
</style>
